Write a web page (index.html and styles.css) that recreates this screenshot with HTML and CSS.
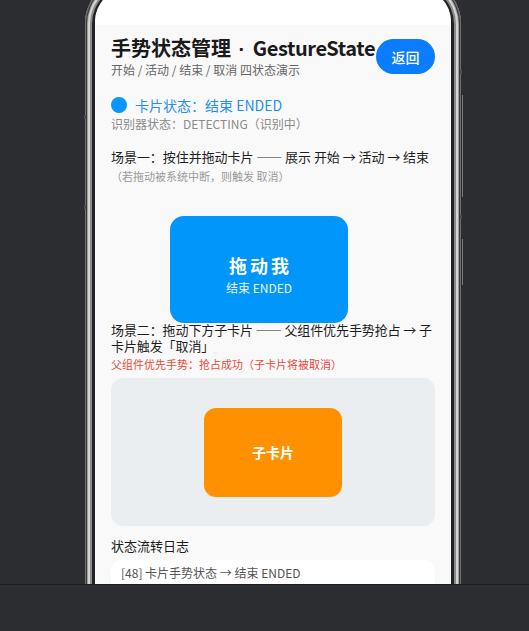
FILE: index.html
```html
<!DOCTYPE html>
<html lang="zh-CN">
<head>
<meta charset="utf-8">
<title>GestureState</title>
<link rel="stylesheet" href="styles.css">
</head>
<body>
<div class="viewport">
  <div class="phone">
    <span class="nub nub-l1"></span>
    <span class="nub nub-l2"></span>
    <span class="nub nub-r1"></span>
    <span class="nub nub-r2"></span>
    <span class="side-btn side-btn-1"></span>
    <span class="side-btn side-btn-2"></span>
    <div class="screen">
      <div class="statusbar"></div>
      <div class="content">
        <div class="header">
          <div class="title-block">
            <div class="title">手势状态管理<span class="sep"> · </span><span class="latin">GestureState</span></div>
            <div class="subtitle">开始 / 活动 / 结束 / 取消 四状态演示</div>
          </div>
          <button class="back-btn">返回</button>
        </div>

        <div class="status-row">
          <span class="dot"></span>
          <span class="status-text">卡片状态：结束 ENDED</span>
        </div>
        <div class="recog">识别器状态：DETECTING（识别中）</div>

        <div class="scene-title scene1">场景一：按住并拖动卡片 —— 展示 开始 → 活动 → 结束</div>
        <div class="note">（若拖动被系统中断，则触发 取消）</div>

        <div class="drag-card">
          <div class="drag-name">拖动我</div>
          <div class="drag-state">结束 ENDED</div>
        </div>

        <div class="scene-title scene2">场景二：拖动下方子卡片 —— 父组件优先手势抢占 → 子卡片触发「取消」</div>
        <div class="alert">父组件优先手势：抢占成功（子卡片将被取消）</div>

        <div class="parent-box">
          <div class="child-card">子卡片</div>
        </div>

        <div class="log-title">状态流转日志</div>
        <div class="log-box">
          <div class="log-line">[48] 卡片手势状态 → 结束 ENDED</div>
        </div>
      </div>
    </div>
  </div>
</div>
<div class="bottombar"></div>
</body>
</html>
```

FILE: styles.css
```css
html, body {
  margin: 0;
  padding: 0;
}

body {
  background: #2c2d31;
  font-family: "Noto Sans CJK SC", "Noto Sans", sans-serif;
  width: 529px;
  height: 631px;
  overflow: hidden;
}

.viewport {
  height: 584px;
  overflow: hidden;
}

.phone {
  position: relative;
  width: 376px;
  margin-left: 85px;
  margin-top: -22px;
  padding: 10px 10px 0 10px;
  box-sizing: border-box;
  border-radius: 46px;
  background: #232325;
  box-shadow:
    inset 0 0 0 1px #6e6e70,
    inset 0 0 0 2px #3c3c3e,
    inset 0 0 0 3px #9c9c9c,
    inset 0 0 0 5px #d4d4d0,
    inset 0 0 0 7px #8a8a8a;
  height: 700px;
}

.nub {
  position: absolute;
  width: 2px;
  height: 4px;
  background: #4a4b4f;
}
.nub-l1 { left: -1px; top: 137px; }
.nub-l2 { left: -1px; top: 227px; }
.nub-r1 { right: -1px; top: 92px; }
.nub-r2 { right: -1px; top: 237px; }

.side-btn {
  position: absolute;
  right: -2px;
  width: 1px;
  background: #75767a;
}
.side-btn-1 { top: 117px; height: 102px; }
.side-btn-2 { top: 261px; height: 46px; }

.screen {
  background: #f9f9f9;
  border-radius: 34px 34px 0 0;
  overflow: hidden;
  height: 690px;
}

.statusbar {
  height: 37px;
  background: #ffffff;
}

.content {
  padding: 0 16px;
}

.header {
  display: flex;
  align-items: flex-start;
  padding-top: 11px;
}

.title-block {
  flex: 1;
  min-width: 0;
}

.title {
  height: 24px;
  font-size: 20px;
  line-height: 24px;
  font-weight: 700;
  color: #1a1a1a;
  white-space: nowrap;
}

.sep {
  font-family: "Liberation Sans", sans-serif;
  word-spacing: 2px;
  line-height: 0;
}

.latin {
  letter-spacing: -0.4px;
}

.subtitle {
  margin-top: 2px;
  font-size: 12px;
  line-height: 16px;
  color: #666666;
  white-space: nowrap;
}

.back-btn {
  flex: none;
  margin-top: 3px;
  width: 59px;
  height: 35px;
  border: none;
  border-radius: 18px;
  background: #0a7dff;
  color: #ffffff;
  font-family: "Noto Sans CJK SC", sans-serif;
  font-size: 14px;
  font-weight: 500;
  padding: 0;
  position: relative;
  z-index: 1;
}

.status-row {
  display: flex;
  align-items: center;
  gap: 8px;
  margin-top: 17px;
  height: 20px;
}

.dot {
  width: 16px;
  height: 16px;
  border-radius: 50%;
  background: #0a96ff;
  flex: none;
}

.status-text {
  font-size: 14px;
  line-height: 20px;
  color: #2490ea;
}

.recog {
  margin-top: 1px;
  font-size: 12px;
  line-height: 16px;
  color: #8a8a8a;
}

.scene-title {
  font-size: 13px;
  color: #1f1f1f;
}

.scene1 {
  margin-top: 16px;
  line-height: 18px;
  white-space: nowrap;
  letter-spacing: -0.05px;
}

.note {
  margin-top: 3px;
  font-size: 11px;
  line-height: 15px;
  color: #9a9a9a;
}

.drag-card {
  margin-top: 32px;
  margin-left: 59px;
  width: 178px;
  height: 107px;
  box-sizing: border-box;
  padding-top: 37px;
  border-radius: 14px;
  background: #0096fa;
  color: #ffffff;
  text-align: center;
}

.drag-name {
  font-size: 18px;
  line-height: 24px;
  font-weight: 700;
  letter-spacing: 3px;
  padding-left: 3px;
}

.drag-state {
  margin-top: 3px;
  font-size: 12px;
  line-height: 16px;
  color: #e8f4ff;
}

.scene2 {
  margin-top: -1px;
  line-height: 16px;
  letter-spacing: -0.1px;
}

.alert {
  margin-top: 3px;
  font-size: 11px;
  line-height: 15px;
  color: #e84a3c;
}

.parent-box {
  margin-top: 6px;
  height: 148px;
  border-radius: 12px;
  background: #ebeef1;
  display: flex;
  align-items: center;
  justify-content: center;
}

.child-card {
  width: 138px;
  height: 89px;
  border-radius: 12px;
  background: #ff9100;
  color: #ffffff;
  font-size: 14px;
  font-weight: 700;
  display: flex;
  align-items: center;
  justify-content: center;
}

.log-title {
  margin-top: 10px;
  font-size: 13px;
  line-height: 20px;
  color: #1f1f1f;
}

.log-box {
  margin-top: 4px;
  background: #ffffff;
  border-radius: 10px;
  padding: 5px 10px;
  height: 60px;
}

.log-line {
  font-size: 12px;
  line-height: 16px;
  color: #555555;
}

.bottombar {
  height: 47px;
  border-top: 1px solid #1d1e21;
  background: #2c2d31;
}
```
